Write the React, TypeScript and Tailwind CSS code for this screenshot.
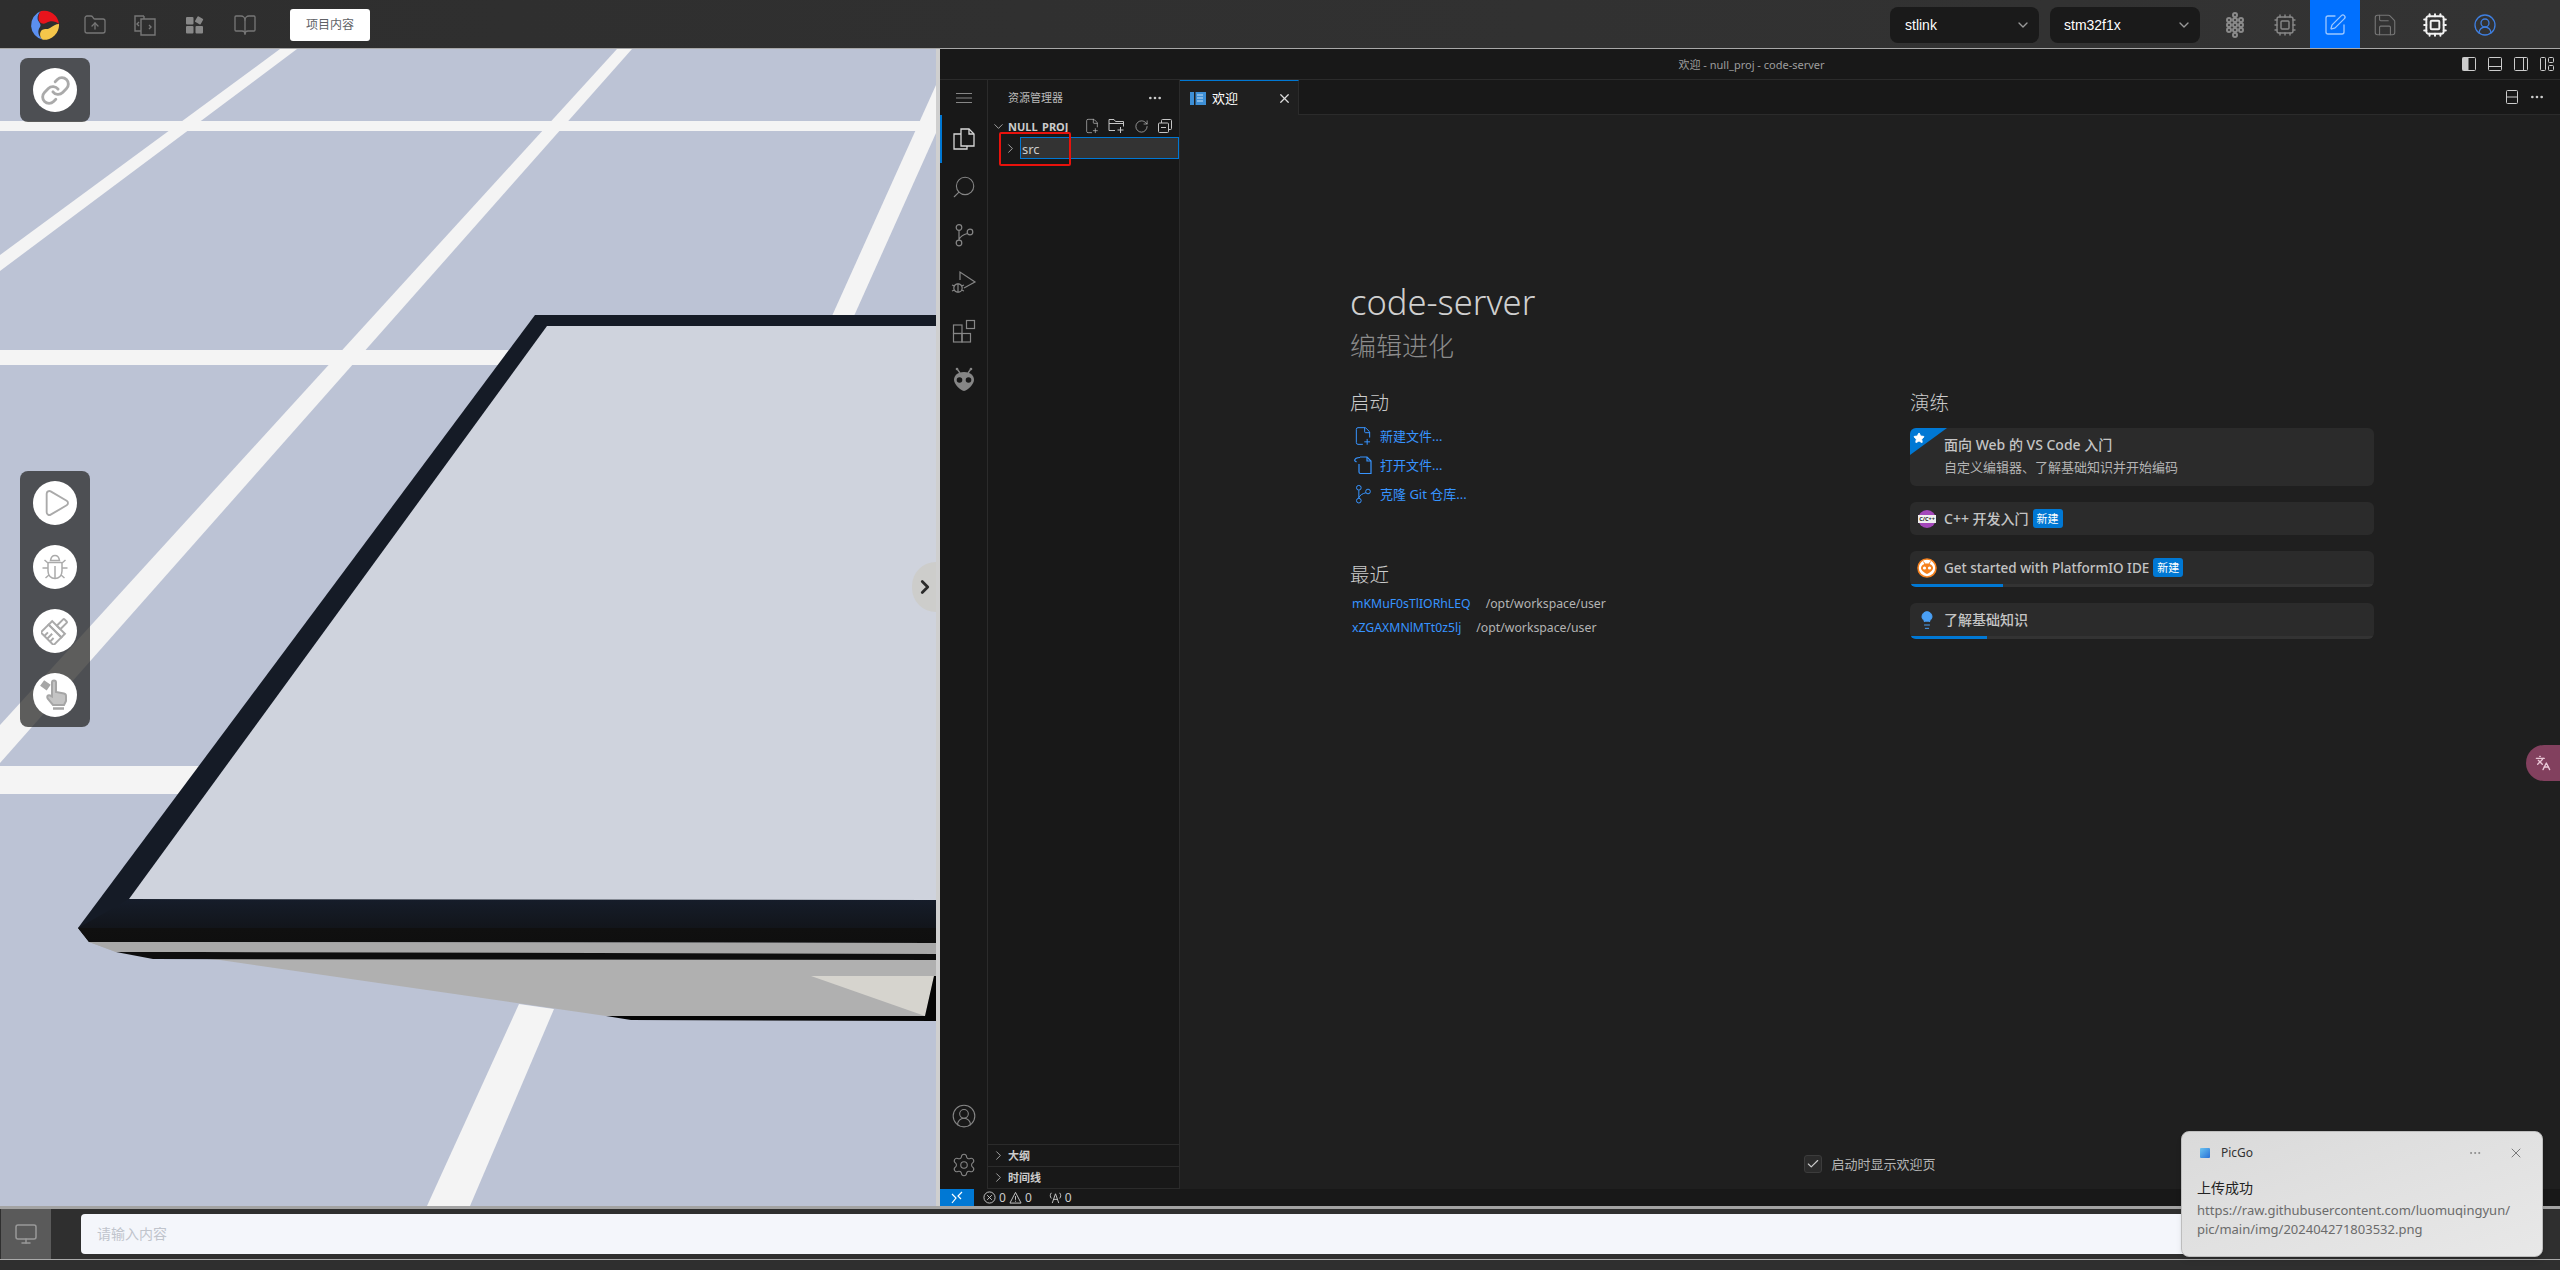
import {
  ChevronDown,
  ChevronRight,
  Cpu,
  Ellipsis,
  FilePlus2,
  FolderUp,
  BookOpen,
  Languages,
  Lightbulb,
  Link,
  Monitor,
  Play,
  RotateCw,
  Save,
  Search,
  Settings,
  SquarePen,
  Star,
  X,
  CircleUserRound,
  Check,
} from "lucide-react";

const LINK_TEXT = "text-[13px] leading-[18px] text-[#3794ff]";

const Logo = () => (
  <svg width="30" height="30" viewBox="0 0 30 30">
    <path d="M12 1A15 15 0 0 0 14 29.8C9 26 8 21 11 17C13 14 9 12 8.6 9C8.3 6 9.5 3 12 1Z" fill="#5b8ff0" />
    <path d="M12 1A15 15 0 0 1 30 14C26 10.5 21 10.5 17 13C13 15 9.5 12 9.5 8.5C9.5 5 10 3 12 1Z" fill="#e8141c" />
    <path d="M30 14A15 15 0 0 1 14 29.8C10 27 10.5 22 13 20C16 18 18 20 21 18C24 16 27 14 30 14Z" fill="#f5c64a" />
  </svg>
);

const CodeDocs = () => (
  <svg width="24" height="24" viewBox="0 0 24 24" fill="none" stroke="#777" strokeWidth="1.4">
    <path d="M11 3H2v15h6" />
    <path d="M11 3v3M8 6h14v16H8z" />
    <path d="M6 9l-2 2 2 2M16 12l2 2-2 2" />
  </svg>
);

const AppsIcon = () => (
  <svg width="20" height="20" viewBox="0 0 20 20" fill="#888">
    <rect x="1" y="2" width="7.5" height="7.5" rx="1" />
    <rect x="1" y="11" width="7.5" height="7.5" rx="1" />
    <rect x="10.5" y="11" width="7.5" height="7.5" rx="1" />
    <rect x="11" y="2" width="6.5" height="6.5" rx="1" transform="rotate(30 14 5)" />
  </svg>
);

const Hive = () => (
  <svg width="20" height="26" viewBox="0 0 20 26" fill="none" stroke="#8a8a8a" strokeWidth="2">
    {[
      [10, 3],
      [4, 8],
      [10, 8],
      [16, 8],
      [4, 13],
      [10, 13],
      [16, 13],
      [4, 18],
      [10, 18],
      [16, 18],
      [10, 23],
    ].map(([cx, cy]) => (
      <circle key={`${cx}-${cy}`} cx={cx} cy={cy} r="2" />
    ))}
  </svg>
);

const GitIcon = ({ color, size = 24 }: { color: string; size?: number }) => (
  <svg width={size} height={size} viewBox="0 0 24 24" fill="none" stroke={color} strokeWidth="1.2">
    <circle cx="7" cy="4.5" r="2.8" />
    <circle cx="7" cy="20" r="2.8" />
    <circle cx="18" cy="9" r="2.8" />
    <path d="M7 7.5v9.5M15.5 10.5c-4 1-7 2.5-8.5 6" />
  </svg>
);

const DebugIcon = () => (
  <svg width="26" height="26" viewBox="0 0 26 26" fill="none" stroke="#868686" strokeWidth="1.2">
    <path d="M9 10V2l15 10-11 6" />
    <circle cx="7" cy="18" r="4.2" />
    <path d="M7 13.5v9M1 15l2.5 1M1 21l2.5-1M13 15l-2.5 1M13 21l-2.5-1" />
  </svg>
);

const ExtensionsIcon = () => (
  <svg width="24" height="24" viewBox="0 0 24 24" fill="none" stroke="#868686" strokeWidth="1.2">
    <rect x="1.5" y="6" width="8.5" height="8.5" />
    <rect x="1.5" y="14.5" width="8.5" height="8.5" />
    <rect x="10" y="14.5" width="8.5" height="8.5" />
    <rect x="14.5" y="1.5" width="8" height="8" />
  </svg>
);

const AlienIcon = ({ color, eye }: { color: string; eye: string }) => (
  <svg width="24" height="26" viewBox="0 0 24 26" fill={color}>
    <path d="M5.5 3.5L8 7M18.5 3.5L16 7" stroke={color} strokeWidth="1.4" />
    <circle cx="5" cy="3" r="1.3" />
    <circle cx="19" cy="3" r="1.3" />
    <path d="M12 6C5 6 2 10 2 14c0 4 6 10 10 11 4-1 10-7 10-11 0-4-3-8-10-8z" />
    <circle cx="7.5" cy="14" r="2.8" fill={eye} />
    <circle cx="16.5" cy="14" r="2.8" fill={eye} />
  </svg>
);

const FolderPlus = () => (
  <svg width="18" height="16" viewBox="0 0 18 16" fill="none" stroke="#c5c5c5" strokeWidth="1">
    <path d="M7 12.5H1V1.500h5l1.500 2h8v5" />
    <path d="M1 5.500h15M12.500 9v6M9.500 12h6" />
  </svg>
);

const CollapseAll = () => (
  <svg width="16" height="16" viewBox="0 0 16 16" fill="none" stroke="#c5c5c5" strokeWidth="1">
    <rect x="1.500" y="5" width="10" height="9.500" rx="1" />
    <path d="M4.500 5V2.500a1 1 0 0 1 1-1h8a1 1 0 0 1 1 1v8a1 1 0 0 1-1 1h-2M4 9.500h5" />
  </svg>
);

const OpenFile = () => (
  <svg width="20" height="20" viewBox="0 0 20 20" fill="none" stroke="#3794ff" strokeWidth="1.2">
    <path d="M7 2h7l4 4v12.500H7.500a1.500 1.500 0 0 1-1.500-1.500V9" />
    <path d="M14 2v4h4M1.500 5.500C2 3 4 2.500 7 2.500M1.500 5.500l2 1.500" />
  </svg>
);

const WelcomeIcon = () => (
  <svg width="16" height="13" viewBox="0 0 16 13">
    <rect width="16" height="13" fill="#3d8fd6" />
    <rect x="4" width="1.500" height="13" fill="#1f1f1f" />
    <path d="M7 3h6M7 6h6M7 9h6" stroke="#c8e1f7" strokeWidth="1" />
  </svg>
);

const CppIcon = () => (
  <svg width="18" height="18" viewBox="0 0 18 18">
    <circle cx="9" cy="9" r="9" fill="#a347ba" />
    <rect y="5" width="18" height="8" fill="#efefef" />
    <text x="9" y="11" textAnchor="middle" fontSize="5.500" fontWeight="700" fill="#222">
      C/C++
    </text>
  </svg>
);

const PioIcon = () => (
  <svg width="20" height="20" viewBox="0 0 20 20">
    <circle cx="10" cy="10" r="9" fill="#fff" stroke="#f5821f" strokeWidth="1.600" />
    <path d="M6.500 3.500L8 6M13.500 3.500L12 6" stroke="#f5821f" strokeWidth="1" />
    <path d="M10 5.500C6 5.500 4 8 4 10c0 2.500 3.500 5 6 6 2.500-1 6-3.500 6-6 0-2-2-4.500-6-4.500z" fill="#f5821f" />
    <circle cx="7.500" cy="10" r="1.600" fill="#fff" />
    <circle cx="12.500" cy="10" r="1.600" fill="#fff" />
  </svg>
);

const BugIcon = () => (
  <svg width="30" height="30" viewBox="0 0 30 30" fill="none" stroke="#aaa" strokeWidth="1.500">
    <path d="M10.500 8.500C11 5 13 3.500 15 3.500s4 1.500 4.500 5z" />
    <path d="M9 10.500h12a1 1 0 0 1 1 1V19c0 4.500-3 7.500-7 7.500S8 23.500 8 19v-7.500a1 1 0 0 1 1-1z" />
    <path d="M15 14v12.500M8 16H2.500M22 16h5.500M8 11L4.500 8M22 11l3.500-3M9 23l-3.500 3M21 23l3.500 3" />
  </svg>
);

const BrushIcon = () => (
  <svg width="28" height="28" viewBox="0 0 28 28" fill="none" stroke="#aaa" strokeWidth="2">
    <g transform="rotate(45 14 14)">
      <rect x="11.500" y="-1" width="5" height="10" rx="1" />
      <rect x="5" y="9" width="18" height="5" />
      <path d="M5 14h18v11H5zM10 25v-5M14 25v-7M18 25v-5" />
    </g>
  </svg>
);

const HandIcon = () => (
  <svg width="32" height="36" viewBox="0 0 32 36" fill="#c4c4c4" stroke="#a6a6a6" strokeWidth="2">
    <rect x="3.500" y="5.500" width="6" height="5" fill="#a6a6a6" transform="rotate(35 6 8)" />
    <path d="M13 19V5.500a2 2 0 0 1 4 0V15l8 1.500a2.500 2.500 0 0 1 2 2.500v5l-2 4H14l-5-6c-1-1.500-1-3 0-3.500 1.500-.8 2.500 0 4 1z" />
    <path d="M14 31.500h11" fill="none" strokeWidth="2.500" />
  </svg>
);

const Scene = () => (
  <svg className="absolute inset-0" width="936" height="1157" viewBox="0 49 936 1157">
    <defs>
      <linearGradient id="edge" gradientUnits="userSpaceOnUse" x1="0" y1="899" x2="0" y2="943">
        <stop offset="0" stopColor="#161d2a" />
        <stop offset="0.65" stopColor="#12151b" />
        <stop offset="0.66" stopColor="#101010" />
        <stop offset="1" stopColor="#0f0f0f" />
      </linearGradient>
    </defs>
    <rect x="0" y="49" width="936" height="1157" fill="#bcc3d5" />
    <g fill="#f4f4f4">
      <rect x="0" y="121" width="936" height="10" />
      <rect x="0" y="350" width="520" height="15" />
      <rect x="0" y="766" width="220" height="28" />
      <polygon points="280,49 297,49 0,271 0,255" />
      <polygon points="617,49 632,49 0,763 0,725" />
      <polygon points="936,85 936,133 854,316 832,316" />
      <polygon points="519,1004 554,1009 470,1206 427,1206" />
    </g>
    <polygon points="535,315 936,315 936,943 89,942 78,928" fill="#151b26" />
    <polygon points="129,899 936,900 936,943 89,942 78,928" fill="url(#edge)" />
    <polygon points="547,326 936,326 936,900 129,899" fill="#cfd3dd" />
    <polygon points="89,942 116,952 220,960 606,1016 925,1016 936,976 936,943" fill="#b0b0b0" />
    <polygon points="89,942 936,943 936,954 116,952" fill="#a9a9a9" />
    <polygon points="116,952 199,952 936,954 936,960 153,959" fill="#0e0e0e" />
    <polygon points="811,976 934,976 925,1016" fill="#d6d4ce" />
    <polygon points="606,1016 925,1016 934,976 936,976 936,1021 631,1020" fill="#050505" />
  </svg>
);

const CircleButton = ({ children }: { children: React.ReactNode }) => (
  <div className="flex h-11 w-11 items-center justify-center rounded-full bg-white">{children}</div>
);

const ActivityItem = ({ children, active }: { children: React.ReactNode; active?: boolean }) => (
  <div className={`flex h-12 w-full items-center justify-center ${active ? "border-l-2 border-[#0078d4] pr-[2px]" : ""}`}>
    {children}
  </div>
);

const Walkthrough = ({
  icon,
  title,
  badge,
  progress,
  size = "text-[14px]",
}: {
  icon: React.ReactNode;
  title: string;
  badge?: boolean;
  progress?: string;
  size?: string;
}) => (
  <div className="flex flex-col overflow-hidden rounded-md bg-[#2b2b2b]">
    <div className="flex h-[33px] items-center">
      <div className="flex w-[34px] justify-center">{icon}</div>
      <span className={`${size} font-medium leading-[18px] text-[#c4c4c4]`}>{title}</span>
      {badge && (
        <span className="ml-1 flex h-[19px] w-[30px] items-center justify-center rounded-[3px] bg-[#0078d4] text-[11px] leading-none text-white">
          新建
        </span>
      )}
    </div>
    {progress && (
      <div className="h-[3px] bg-[#333]">
        <div className={`h-full bg-[#0078d4] ${progress}`} />
      </div>
    )}
  </div>
);

export default function App() {
  return (
    <div className="relative flex h-[1270px] w-[2560px] flex-col overflow-hidden bg-[#2f2f2f] font-['Noto_Sans','Noto_Sans_CJK_SC',sans-serif]">
      {/* top bar */}
      <header className="flex h-[49px] shrink-0 items-center border-b border-[#a8a8a8] bg-gradient-to-r from-[#2e2e2e] to-[#333] pl-[29px]">
        <div className="mt-[2px] flex items-center">
          <Logo />
          <div className="ml-[24px] flex items-center gap-[26px]">
            <FolderUp size={24} strokeWidth={1.3} color="#777" />
            <CodeDocs />
            <div className="flex w-6 justify-center">
              <AppsIcon />
            </div>
            <BookOpen size={24} strokeWidth={1.3} color="#777" />
          </div>
          <button className="ml-[33px] h-8 w-20 rounded-[3px] bg-white text-[12px] leading-none text-[#606266]">项目内容</button>
        </div>
        <div className="ml-auto flex h-full items-center pr-[50px]">
          <div className="mt-[2px] flex h-9 w-[149px] items-center justify-between rounded-lg bg-[#1a1a1a] pl-[15px] pr-[8px] font-['Liberation_Sans',sans-serif] text-[14px] text-white">
            stlink
            <ChevronDown size={16} color="#999" />
          </div>
          <div className="ml-[11px] mt-[2px] flex h-9 w-[150px] items-center justify-between rounded-lg bg-[#1a1a1a] pl-[14px] pr-[8px] font-['Liberation_Sans',sans-serif] text-[14px] text-white">
            stm32f1x
            <ChevronDown size={16} color="#999" />
          </div>
          <div className="ml-[10px] flex h-full">
            <div className="flex w-[50px] items-center justify-center pt-[2px]">
              <Hive />
            </div>
            <div className="flex w-[50px] items-center justify-center pt-[2px]">
              <Cpu size={24} strokeWidth={1.4} color="#888" />
            </div>
            <div className="flex w-[50px] items-center justify-center bg-[#0070ff] pt-[2px]">
              <SquarePen size={24} strokeWidth={1.3} color="#9cc7ff" />
            </div>
            <div className="flex w-[50px] items-center justify-center pt-[2px]">
              <Save size={26} strokeWidth={1} color="#777" />
            </div>
            <div className="flex w-[50px] items-center justify-center pt-[2px]">
              <Cpu size={26} strokeWidth={1.8} color="#f2f2f2" />
            </div>
            <div className="flex w-[50px] items-center justify-center pt-[2px]">
              <CircleUserRound size={24} strokeWidth={1.3} color="#3f7fe0" />
            </div>
          </div>
        </div>
      </header>

      <main className="flex h-[1157px] shrink-0">
        {/* 3d viewport */}
        <section className="relative w-[936px] shrink-0 overflow-hidden bg-[#bcc3d5]">
          <Scene />
          <div className="absolute left-5 top-[9px] flex h-[64px] w-[70px] items-center justify-center rounded-lg bg-[rgba(34,34,33,0.72)]">
            <CircleButton>
              <Link size={31} strokeWidth={2.2} color="#aaa" />
            </CircleButton>
          </div>
          <div className="absolute left-5 top-[422px] flex w-[70px] flex-col items-center gap-5 rounded-lg bg-[rgba(34,34,33,0.72)] py-[10px]">
            <CircleButton>
              <Play size={32} strokeWidth={1.4} color="#aaa" className="ml-0.5" />
            </CircleButton>
            <CircleButton>
              <BugIcon />
            </CircleButton>
            <CircleButton>
              <BrushIcon />
            </CircleButton>
            <CircleButton>
              <HandIcon />
            </CircleButton>
          </div>
          <div className="absolute right-0 top-[513px] flex h-[50px] w-[24px] items-center justify-end rounded-l-full bg-[#cdcdcb]">
            <ChevronRight size={22} strokeWidth={3} color="#2b2b2b" />
          </div>
        </section>
        <div className="w-1 shrink-0 bg-[#cfcfcf]" />

        {/* code-server window */}
        <section className="flex min-w-0 flex-1 flex-col bg-[#181818]">
          <div className="flex h-[31px] shrink-0 items-center border-b border-[#2b2b2b] bg-[#181818]">
            <div className="flex-1 pl-[102px] text-center text-[11px] leading-none text-[#9d9d9d]">欢迎 - null_proj - code-server</div>
            <div className="flex items-center gap-[10px] pr-[5px]">
              <svg width="16" height="16" viewBox="0 0 16 16" fill="none" stroke="#ccc"><rect x="1.500" y="1.500" width="13" height="13" rx="1" /><rect x="2" y="2" width="5" height="12" fill="#ccc" /></svg>
              <svg width="16" height="16" viewBox="0 0 16 16" fill="none" stroke="#ccc"><rect x="1.500" y="1.500" width="13" height="13" rx="1" /><path d="M2 10.500h12" /></svg>
              <svg width="16" height="16" viewBox="0 0 16 16" fill="none" stroke="#ccc"><rect x="1.500" y="1.500" width="13" height="13" rx="1" /><path d="M10.500 2v12" /></svg>
              <svg width="16" height="16" viewBox="0 0 16 16" fill="none" stroke="#ccc"><rect x="1.500" y="1.500" width="5" height="13" rx="1" /><rect x="9.500" y="1.500" width="5" height="5" rx="1" /><rect x="9.500" y="9.500" width="5" height="5" rx="1" /></svg>
            </div>
          </div>

          <div className="flex min-h-0 flex-1">
            {/* activity bar */}
            <nav className="flex w-[48px] shrink-0 flex-col items-center border-r border-[#2b2b2b]">
              <div className="flex h-[35px] items-center justify-center pt-[1px]">
                <svg width="16" height="12" viewBox="0 0 16 12" stroke="#868686" strokeWidth="1"><path d="M0 1.500h16M0 6h16M0 10.500h16" /></svg>
              </div>
              <ActivityItem active>
                <svg width="24" height="24" viewBox="0 0 24 24" fill="none" stroke="#d7d7d7" strokeWidth="1.300">
                  <path d="M9 2h8l5 5v12H9z" />
                  <path d="M17 2v5h5" />
                  <path d="M9 7H2v15h13v-3" />
                </svg>
              </ActivityItem>
              <ActivityItem>
                <Search size={26} strokeWidth={1} color="#868686" className="-scale-x-100" />
              </ActivityItem>
              <ActivityItem>
                <GitIcon color="#868686" />
              </ActivityItem>
              <ActivityItem>
                <DebugIcon />
              </ActivityItem>
              <ActivityItem>
                <ExtensionsIcon />
              </ActivityItem>
              <ActivityItem>
                <AlienIcon color="#868686" eye="#181818" />
              </ActivityItem>
              <div className="mt-auto flex h-12 items-center justify-center">
                <CircleUserRound size={26} strokeWidth={1} color="#868686" />
              </div>
              <div className="flex h-[49px] items-center justify-center">
                <Settings size={26} strokeWidth={1} color="#868686" />
              </div>
            </nav>

            {/* explorer */}
            <aside className="flex w-[192px] shrink-0 flex-col border-r border-[#2b2b2b]">
              <div className="flex h-[35px] shrink-0 items-center justify-between pl-5 pr-4">
                <span className="text-[11px] leading-none text-[#bbb]">资源管理器</span>
                <Ellipsis size={16} color="#ccc" />
              </div>
              <div className="flex h-[22px] shrink-0 items-center">
                <ChevronDown size={15} strokeWidth={1.2} color="#ccc" className="ml-[3px] mr-[2px]" />
                <span className="text-[11px] font-bold leading-none text-[#ccc]">NULL_PROJ</span>
                <div className="ml-auto flex items-center gap-[8px] pr-[6px]">
                  <FilePlus2 size={16} strokeWidth={1} color="#c5c5c5" />
                  <FolderPlus />
                  <RotateCw size={15} strokeWidth={1.1} color="#c5c5c5" />
                  <CollapseAll />
                </div>
              </div>
              <div className="relative flex h-[22px] shrink-0 items-center">
                <ChevronRight size={15} strokeWidth={1.2} color="#ccc" className="ml-[15px] mr-[2px] w-[15px] shrink-0" />
                <div className="flex h-full flex-1 items-center border border-[#0078d4] bg-[#333] pl-px pt-[2px] text-[13px] leading-none text-[#ccc]">src</div>
                <div className="absolute left-[11px] top-[-5px] h-[34px] w-[72px] rounded-[2px] border-2 border-[#e8120c]" />
              </div>
              <div className="flex-1" />
              <div className="flex h-[22px] shrink-0 items-center border-t border-[#2b2b2b]">
                <ChevronRight size={15} strokeWidth={1.2} color="#ccc" className="ml-[3px] mr-[2px]" />
                <span className="text-[11px] font-bold leading-none text-[#ccc]">大纲</span>
              </div>
              <div className="flex h-[23px] shrink-0 items-center border-y border-[#2b2b2b]">
                <ChevronRight size={15} strokeWidth={1.2} color="#ccc" className="ml-[3px] mr-[2px]" />
                <span className="text-[11px] font-bold leading-none text-[#ccc]">时间线</span>
              </div>
            </aside>

            {/* editor */}
            <div className="flex min-w-0 flex-1 flex-col bg-[#1f1f1f]">
              <div className="flex h-[35px] shrink-0 border-b border-[#2b2b2b] bg-[#181818]">
                <div className="flex h-[35px] w-[119px] items-center border-t border-r border-t-[#0078d4] border-r-[#2b2b2b] bg-[#1f1f1f] pl-[10px]">
                  <WelcomeIcon />
                  <span className="ml-[6px] text-[13px] leading-none text-white">欢迎</span>
                  <X size={15} color="#ddd" className="ml-auto mr-[6px]" />
                </div>
                <div className="ml-auto flex items-center gap-[9px] pr-[15px]">
                  <svg width="16" height="16" viewBox="0 0 16 16" fill="none" stroke="#ccc"><rect x="2.500" y="1.500" width="11" height="13" rx="1" /><path d="M3 8h10" /></svg>
                  <Ellipsis size={16} color="#ccc" />
                </div>
              </div>

              <div className="flex min-h-0 flex-1 flex-col pl-[170px] pt-[165px]">
                <h1 className="text-[34.5px] font-light leading-[44px] text-[#cfcfcf]">code-server</h1>
                <h2 className="mt-1 text-[26px] font-light leading-9 text-[#8c8c8c]">编辑进化</h2>
                <div className="mt-[25px] flex">
                  <div className="w-[560px] shrink-0">
                    <h3 className="text-[19.5px] font-light leading-7 text-[#ccc]">启动</h3>
                    <div className="mt-[4px] flex flex-col">
                      <div className="flex h-[29px] items-center">
                        <div className="mr-1 flex w-[26px] justify-center"><FilePlus2 size={20} strokeWidth={1.2} color="#3794ff" /></div>
                        <span className={LINK_TEXT}>新建文件...</span>
                      </div>
                      <div className="flex h-[29px] items-center">
                        <div className="mr-1 flex w-[26px] justify-center"><OpenFile /></div>
                        <span className={LINK_TEXT}>打开文件...</span>
                      </div>
                      <div className="flex h-[29px] items-center">
                        <div className="mr-1 flex w-[26px] justify-center"><GitIcon color="#3794ff" size={20} /></div>
                        <span className={LINK_TEXT}>克隆 Git 仓库...</span>
                      </div>
                    </div>
                    <h3 className="mt-[53px] text-[19.5px] font-light leading-7 text-[#ccc]">最近</h3>
                    <div className="mt-[3px] flex flex-col pl-[2px]">
                      <div className="flex h-6 items-center text-[12.25px] leading-none">
                        <span className="text-[#3794ff]">mKMuF0sTlIORhLEQ</span>
                        <span className="ml-[15px] text-[#b4b4b4]">/opt/workspace/user</span>
                      </div>
                      <div className="flex h-6 items-center text-[12.25px] leading-none">
                        <span className="text-[#3794ff]">xZGAXMNlMTt0z5lj</span>
                        <span className="ml-[15px] text-[#b4b4b4]">/opt/workspace/user</span>
                      </div>
                    </div>
                  </div>
                  <div className="w-[464px] shrink-0">
                    <h3 className="text-[19.5px] font-light leading-7 text-[#ccc]">演练</h3>
                    <div className="mt-[11px] flex flex-col gap-4">
                      <div className="relative h-[58px] overflow-hidden rounded-md bg-[#2b2b2b] pl-[34px] pt-[7px]">
                        <div className="absolute left-0 top-0 h-[27px] w-[37px] bg-[#0078d4] [clip-path:polygon(0_0,100%_0,0_100%)]" />
                        <Star size={12} fill="#fff" color="#fff" className="absolute left-[3px] top-[4px]" />
                        <div className="text-[14px] font-medium leading-5 text-[#c4c4c4]">面向 Web 的 VS Code 入门</div>
                        <div className="mt-[2px] text-[13px] leading-5 text-[#b4b4b4]">自定义编辑器、了解基础知识并开始编码</div>
                      </div>
                      <Walkthrough icon={<CppIcon />} title="C++ 开发入门" badge />
                      <Walkthrough icon={<PioIcon />} title="Get started with PlatformIO IDE" badge progress="w-[93px]" size="text-[13.5px]" />
                      <Walkthrough
                        icon={<Lightbulb size={20} fill="#4aa0f5" color="#4aa0f5" strokeWidth={1.2} />}
                        title="了解基础知识"
                        progress="w-[77px]"
                      />
                    </div>
                  </div>
                </div>
                <div className="mb-[13px] ml-[-170px] mt-auto flex h-6 items-center justify-center">
                  <div className="flex h-[18px] w-[18px] items-center justify-center rounded-[3px] border border-[#3c3c3c] bg-[#2b2b2b]">
                    <Check size={14} color="#ccc" />
                  </div>
                  <span className="ml-[9px] text-[13px] leading-none text-[#b4b4b4]">启动时显示欢迎页</span>
                </div>
              </div>
            </div>
          </div>

          {/* status bar */}
          <footer className="flex h-[17px] shrink-0 items-center bg-[#181818] text-[12px] leading-none text-[#ccc]">
            <div className="flex h-full w-[34px] items-center justify-center bg-[#0078d4]">
              <svg width="14" height="14" viewBox="0 0 14 14" fill="none" stroke="#fff" strokeWidth="1.200"><path d="M2 3l4 4-4 5M12 1L8 5l3 3" /></svg>
            </div>
            <svg className="ml-[9px]" width="13" height="13" viewBox="0 0 14 14" fill="none" stroke="#ccc"><circle cx="7" cy="7" r="6" /><path d="M4.500 4.500l5 5M9.500 4.500l-5 5" /></svg>
            <span className="ml-[3px]">0</span>
            <svg className="ml-[3px]" width="13" height="13" viewBox="0 0 14 14" fill="none" stroke="#ccc"><path d="M7 1.500L13 13H1zM7 5.500v4M7 10.500v1" /></svg>
            <span className="ml-[3px]">0</span>
            <svg className="ml-[17px]" width="13" height="13" viewBox="0 0 14 14" fill="none" stroke="#ccc"><path d="M7 3L3.500 13M7 3l3.500 10M5 9h4M2.500 2C1 4 1 6 2.500 8M11.500 2c1.500 2 1.500 4 0 6" /></svg>
            <span className="ml-[3px]">0</span>
          </footer>
        </section>
      </main>

      {/* bottom command bar */}
      <div className="h-[3px] shrink-0 bg-[#a3a3a3]" />
      <div className="flex h-[51px] shrink-0 border-b border-[#aaa] pl-[1px]">
        <div className="flex h-[50px] w-[50px] items-center justify-center bg-[#5a5a5a]">
          <Monitor size={24} strokeWidth={1.5} color="#999" />
        </div>
        <div className="ml-[30px] mt-[5px] flex h-[40px] w-[2420px] items-center rounded-[4px] bg-[#f4f6fb] pl-4 text-[14px] leading-none text-[#c0c4cc]">请输入内容</div>
      </div>

      {/* PicGo notification */}
      <div className="absolute left-[2181px] top-[1131px] h-[126px] w-[362px] rounded-lg border border-[#bdbdbd] bg-gradient-to-br from-[#dadada] to-[#e8e8e8] px-[15px] shadow-md">
        <div className="flex h-[42px] items-center">
          <div className="ml-[3px] h-[10px] w-[10px] rounded-[1px] bg-gradient-to-br from-[#6cc3f0] to-[#2a6fd6]" />
          <span className="ml-[11px] text-[12px] leading-none text-[#333]">PicGo</span>
          <Ellipsis size={14} strokeWidth={1.2} color="#777" className="ml-auto mr-[26px]" />
          <X size={16} strokeWidth={1} color="#444" className="mr-[3px]" />
        </div>
        <div className="mt-1 text-[14px] leading-5 text-[#222]">上传成功</div>
        <div className="mt-[3px] text-[13px] leading-[19px] text-[#6b6b6b]">
          https://raw.githubusercontent.com/luomuqingyun/
          <br />
          pic/main/img/202404271803532.png
        </div>
      </div>

      {/* translate bubble */}
      <div className="absolute right-0 top-[745px] flex h-9 w-[34px] items-center justify-center rounded-l-full bg-[#82405e]">
        <Languages size={16} color="#e9c6d6" />
      </div>
    </div>
  );
}
